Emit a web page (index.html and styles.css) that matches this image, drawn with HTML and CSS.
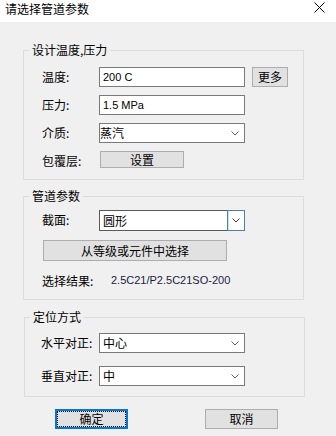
FILE: index.html
```html
<!DOCTYPE html>
<html lang="zh-CN">
<head>
  <meta charset="UTF-8">
  <meta name="viewport" content="width=device-width, initial-scale=1.0">
  <title>请选择管道参数</title>
  <link rel="stylesheet" href="styles.css">
</head>
<body>
  <div class="dialog">
    <div class="titlebar">
      <span class="title">请选择管道参数</span>
      <svg class="close" width="11" height="11" viewBox="0 0 11 11">
        <path d="M0.5 0.5 L10.5 10.5 M10.5 0.5 L0.5 10.5" stroke="#000" stroke-width="1" fill="none"/>
      </svg>
    </div>

    <div class="content">
      <fieldset class="group group-design">
        <legend>设计温度,压力</legend>
        <div class="rows">
          <div class="row">
            <span class="label">温度:</span>
            <div class="field"><span class="latin">200 C</span></div>
            <button class="btn btn-more">更多</button>
          </div>
          <div class="row">
            <span class="label">压力:</span>
            <div class="field"><span class="latin">1.5 MPa</span></div>
          </div>
          <div class="row">
            <span class="label">介质:</span>
            <div class="field select select-tight">
              <span class="value">蒸汽</span>
              <svg class="chevron" width="8" height="5" viewBox="0 0 8 5"><path d="M0.5 0.5 L4 4 L7.5 0.5" stroke="#606060" fill="none"/></svg>
            </div>
          </div>
          <div class="row">
            <span class="label">包覆层:</span>
            <button class="btn btn-setup">设置</button>
          </div>
        </div>
      </fieldset>

      <fieldset class="group group-pipe">
        <legend>管道参数</legend>
        <div class="rows">
          <div class="row">
            <span class="label">截面:</span>
            <div class="field select combo-active">
              <span class="value">圆形</span>
              <span class="combo-arrow">
                <svg class="chevron" width="8" height="5" viewBox="0 0 8 5"><path d="M0.5 0.5 L4 4 L7.5 0.5" stroke="#404040" fill="none"/></svg>
              </span>
            </div>
          </div>
          <button class="btn btn-pick">从等级或元件中选择</button>
          <div class="result">
            <span class="result-label">选择结果:</span>
            <span class="latin result-value">2.5C21/P2.5C21SO-200</span>
          </div>
        </div>
      </fieldset>

      <fieldset class="group group-place">
        <legend>定位方式</legend>
        <div class="rows">
          <div class="row">
            <span class="label">水平对正:</span>
            <div class="field select">
              <span class="value">中心</span>
              <svg class="chevron" width="8" height="5" viewBox="0 0 8 5"><path d="M0.5 0.5 L4 4 L7.5 0.5" stroke="#606060" fill="none"/></svg>
            </div>
          </div>
          <div class="row">
            <span class="label">垂直对正:</span>
            <div class="field select">
              <span class="value">中</span>
              <svg class="chevron" width="8" height="5" viewBox="0 0 8 5"><path d="M0.5 0.5 L4 4 L7.5 0.5" stroke="#606060" fill="none"/></svg>
            </div>
          </div>
        </div>
      </fieldset>

      <div class="footer">
        <button class="btn btn-action btn-default">确定</button>
        <button class="btn btn-action">取消</button>
      </div>
    </div>
  </div>
</body>
</html>
```

FILE: styles.css
```css
* {
  box-sizing: border-box;
}
body {
  margin: 0;
  font-family: "Noto Sans CJK SC", sans-serif;
  font-size: 12px;
  color: #000;
  background: #f0f0f0;
}
.dialog {
  width: 336px;
  height: 436px;
  background: #f0f0f0;
}
.titlebar {
  height: 22px;
  background: #fff;
  display: flex;
  align-items: flex-start;
  justify-content: space-between;
  padding: 0 11px 0 5px;
}
.title {
  line-height: 17px;
}
.close {
  margin-top: 2px;
}
.content {
  padding-top: 20px;
}
.group {
  width: 281px;
  margin: 0 0 0 23px;
  padding: 9px 0 8px 5px;
  border: 1px solid #dcdcdc;
}
.group legend {
  padding: 0 3px;
  line-height: 16px;
}
.rows {
  padding-left: 13px;
  display: flex;
  flex-direction: column;
  gap: 8px;
}
.row {
  display: grid;
  grid-template-columns: 57px 146px auto;
  align-items: start;
}
.label {
  line-height: 20px;
}
.latin {
  font-family: "Liberation Sans", sans-serif;
  font-size: 11px;
}
.field {
  height: 20px;
  background: #fff;
  border: 1px solid #7a7a7a;
  padding-left: 3px;
  display: flex;
  align-items: center;
}
.select {
  justify-content: space-between;
  padding-right: 5px;
}
.select-tight {
  padding-left: 0;
}
.select .value {
  line-height: 18px;
}
.combo-active {
  height: 21px;
  border-color: #5a5a5a;
  padding-right: 0;
}
.combo-arrow {
  align-self: stretch;
  width: 18px;
  margin: -1px -1px -1px 0;
  border: 1px solid #4f7ea8;
  box-shadow: inset 1px 0 0 #cce4f7;
  display: flex;
  align-items: center;
  justify-content: center;
}
.btn {
  font-family: "Noto Sans CJK SC", sans-serif;
  font-size: 12px;
  color: #000;
  background: #e1e1e1;
  border: 1px solid #adadad;
  border-radius: 0;
  padding: 0;
  margin: 0;
  line-height: 1;
}
.btn-more {
  width: 36px;
  height: 20px;
  margin-left: 7px;
}
.btn-setup {
  width: 84px;
  height: 17px;
  margin-left: 1px;
}

/* 管道参数 */
.group-pipe {
  margin-top: 8px;
  padding: 6px 0 10px 5px;
}
.group-pipe .rows {
  gap: 9px;
}
.btn-pick {
  width: 184px;
  height: 21px;
  margin-left: 1px;
}
.result {
  display: flex;
  align-items: center;
  height: 18px;
  margin-top: 1px;
}
.result-label {
  width: 69px;
}
.result-value {
  color: #1b1b3a;
}

/* 定位方式 */
.group-place {
  margin: 9px 0 0 24px;
  padding: 8px 0 10px 5px;
}
.group-place .rows {
  padding-left: 11px;
  gap: 13px;
}
.group-place .row {
  grid-template-columns: 58px 146px;
}

.footer {
  display: flex;
  gap: 77px;
  padding-left: 55px;
  margin-top: 12px;
}
.btn-action {
  width: 73px;
  height: 20px;
}
.btn-default {
  border: 2px solid #0078d7;
  outline: 1px dotted #000;
  outline-offset: -3px;
}
```
